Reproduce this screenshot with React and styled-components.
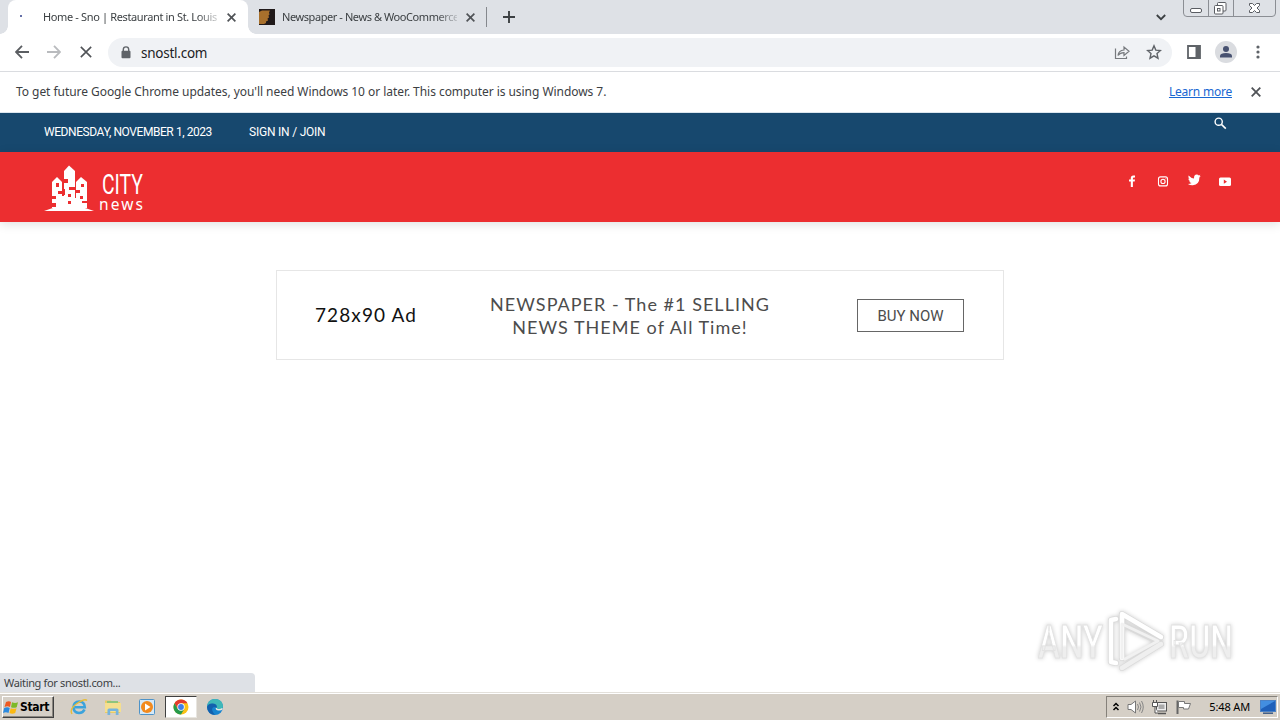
import styled, { createGlobalStyle } from 'styled-components'

const ui = '"Noto Sans", "Open Sans", sans-serif'

const socials = ['facebook', 'instagram', 'twitter', 'youtube']

function App() {
  return (
    <Window>
      <GlobalStyle />
      <TabStrip>
        <ActiveTab>
          <Spinner />
          <TabTitle $spacing={-0.36}>Home - Sno | Restaurant in St. Louis</TabTitle>
          <Cross size={9} weight={1.7} />
        </ActiveTab>
        <Tab>
          <Favicon />
          <TabTitle $spacing={-0.42}>Newspaper - News &amp; WooCommerce</TabTitle>
          <Cross size={9} weight={1.7} />
        </Tab>
        <NewTab>
          <svg width="12" height="12" viewBox="0 0 12 12">
            <path d="M6 0v12M0 6h12" stroke="#3c4043" strokeWidth="1.9" />
          </svg>
        </NewTab>
        <TabSearch>
          <svg width="10" height="7" viewBox="0 0 10 7">
            <path d="M.8 1 5 5.2 9.2 1" fill="none" stroke="#3c4043" strokeWidth="1.8" />
          </svg>
        </TabSearch>
        <WindowButtons />
      </TabStrip>

      <Toolbar>
        <Arrow color="#5b5e62" />
        <Arrow color="#b9bbbe" flip />
        <Stop>
          <Cross size={12} weight={1.6} />
        </Stop>
        <Omnibox>
          <svg width="10" height="13" viewBox="0 0 10 13">
            <path d="M2.3 6V3.6a2.7 2.7 0 0 1 5.4 0V6" fill="none" stroke="#5f6368" strokeWidth="1.4" />
            <rect x=".5" y="4.8" width="9" height="7.4" rx="1" fill="#5f6368" />
          </svg>
          <Url>snostl.com</Url>
          <ShareIcon />
          <StarIcon />
        </Omnibox>
        <ToolbarActions />
      </Toolbar>

      <InfoBar>
        <InfoText>
          To get future Google Chrome updates, you'll need Windows 10 or later. This computer is using Windows 7.
        </InfoText>
        <LearnMore>Learn more</LearnMore>
        <Cross size={10} weight={1.8} />
      </InfoBar>

      <TopBar>
        <TopText $width={205} $spacing={-0.43}>
          WEDNESDAY, NOVEMBER 1, 2023
        </TopText>
        <TopText $spacing={-0.22}>SIGN IN / JOIN</TopText>
        <Search width="13" height="13" viewBox="0 0 13 13">
          <circle cx="4.7" cy="4.7" r="3.6" fill="none" stroke="#fff" strokeWidth="1.4" />
          <path d="m7.4 7.4 4.4 4.2" stroke="#fff" strokeWidth="1.6" />
        </Search>
      </TopBar>

      <Header>
        <CityLogo />
        <Socials>
          {socials.map((name) => (
            <SocialIcon key={name} name={name} />
          ))}
        </Socials>
      </Header>

      <Page>
        <Ad>
          <AdSize>728x90 Ad</AdSize>
          <AdCopy>
            <AdLine>NEWSPAPER - The #1 SELLING</AdLine>
            <AdLine>NEWS THEME of All Time!</AdLine>
          </AdCopy>
          <Buy>BUY NOW</Buy>
        </Ad>
        <PageFooter>
          <Status>Waiting for snostl.com...</Status>
          <AnyRun />
        </PageFooter>
      </Page>

      <Taskbar>
        <StartButton>
          <WindowsFlag />
          <span>Start</span>
        </StartButton>
        <Launchers />
        <Tray />
      </Taskbar>
    </Window>
  )
}

export default App

function Cross({ size, weight }) {
  return (
    <svg width={size} height={size} viewBox="0 0 10 10">
      <path d="m.7.7 8.6 8.6M9.3.7.7 9.3" stroke="#505357" strokeWidth={(weight * 10) / size} />
    </svg>
  )
}

function Arrow({ color, flip }) {
  return (
    <svg width="14" height="14" viewBox="0 0 14 14">
      <path
        d={flip ? 'M0 7h12.5M7 .8 13 7l-6 6.2' : 'M14 7H1.5M7 .8 1 7l6 6.2'}
        fill="none"
        stroke={color}
        strokeWidth="1.8"
      />
    </svg>
  )
}

function Favicon() {
  return (
    <svg width="16" height="16" viewBox="0 0 16 16">
      <rect width="16" height="16" fill="#20191a" />
      <path d="M0 3l3-1.500h8l-1 2 .5 2-1 1 .5 2-1.500 1 .5 2-2 1v1.500l-2 1H0z" fill="#a8702c" />
    </svg>
  )
}

function WindowButtons() {
  return (
    <svg width="94" height="17" viewBox="0 0 94 17">
      <path d="M.5 0v13q0 3.500 3.500 3.500h85q3.500 0 3.500-3.500V0M25.500 0v16M50.500 0v16" fill="none" stroke="#8b8e94" />
      <rect x="7.500" y="8.500" width="11" height="4" rx="1.500" fill="#fff" stroke="#5a5d63" />
      <rect x="34.500" y="2.500" width="8.500" height="8.500" rx="1" fill="#fff" stroke="#5a5d63" />
      <rect x="31.500" y="5.500" width="8.500" height="8.500" rx="1" fill="#fff" stroke="#5a5d63" />
      <rect x="34.500" y="8.500" width="2.500" height="2.500" fill="none" stroke="#5a5d63" />
      <path
        d="M66.500 3.500h3l2 2 2-2h3v2L74 8l2.500 2.500v2h-3l-2-2-2 2h-3v-2L69 8l-2.500-2.500z"
        fill="#fff"
        stroke="#5a5d63"
      />
    </svg>
  )
}

function ShareIcon() {
  return (
    <svg width="16" height="15" viewBox="0 0 16 15">
      <path d="M1.500 3.500v10h11v-2" fill="none" stroke="#777a7e" strokeWidth="1.200" />
      <path
        d="M4 10.500q.5-5 6-5.500V2l5 4.200-5 4.200V7.600Q6 7.600 4 10.500z"
        fill="none"
        stroke="#777a7e"
        strokeWidth="1.200"
      />
    </svg>
  )
}

function StarIcon() {
  return (
    <svg width="16" height="16" viewBox="0 0 16 16">
      <path
        d="m8 1.800 1.800 4.300 4.700.4-3.500 3.100 1 4.600L8 11.800l-4 2.400 1-4.600-3.500-3.100 4.700-.4z"
        fill="none"
        stroke="#5f6368"
        strokeWidth="1.400"
      />
    </svg>
  )
}

function ToolbarActions() {
  return (
    <Actions>
      <svg width="14" height="14" viewBox="0 0 14 14">
        <path d="M1 1h12v12H1z" fill="#fff" stroke="#5f6368" strokeWidth="1.800" />
        <path d="M8.500 1H13v12H8.500z" fill="#5f6368" />
      </svg>
      <svg width="22" height="22" viewBox="0 0 22 22">
        <circle cx="11" cy="11" r="11" fill="#dadce0" />
        <circle cx="11" cy="8" r="3" fill="#475170" />
        <path d="M5 16.500v-1.800Q5.500 12 11 12t6 2.700v1.800z" fill="#475170" />
      </svg>
      <svg width="4" height="14" viewBox="0 0 4 14" fill="#5f6368">
        <circle cx="2" cy="2" r="1.600" />
        <circle cx="2" cy="7" r="1.600" />
        <circle cx="2" cy="12" r="1.600" />
      </svg>
    </Actions>
  )
}

function CityLogo() {
  return (
    <svg width="104" height="50" viewBox="0 0 104 50">
      <g fill="#fff">
        <path d="M0 46q8-3.500 16-4h18q8 .5 16 4z" />
        <path d="M8 17l5-5 5 5v26H8z" />
        <path d="M20 6l5-5.500L31 6v37H20z" />
        <path d="M32 17l5-5 6 5v26H32z" />
        <path d="M17 31h4v11h-4zM30 33h3v9h-3z" />
      </g>
      <g fill="#ec2e30">
        <path d="M12 18h3v4h-3zM14 26h4v3h-4zM8 31h4v3H8zM20 14h4v4h-4zM25 22h6v3h-6zM18 24h3v6h-3zM24 29h3v3h-3zM24 36h3v3h-3zM37 19h3v3h-3zM32 25h4v3h-4zM36 31h3v3h-3zM38 36h5v2h-5zM8 38h4v4H8z" />
      </g>
      <g fill="#fff">
        <text x="58" y="29" fontFamily="Roboto" fontSize="27" textLength="41" lengthAdjust="spacingAndGlyphs">
          CITY
        </text>
        <text x="55" y="44.500" fontFamily="Noto Sans" fontSize="15.500" textLength="44">
          news
        </text>
      </g>
    </svg>
  )
}

function SocialIcon({ name }) {
  return (
    <svg width="14" height="14" viewBox="0 0 14 14" fill="#fff">
      {name === 'facebook' && (
        <path d="M5.800 13V7.500H4V5.600h1.800V4q0-2.500 2.500-2.500H10v1.900H8.900q-1 0-1 1v1.200H10l-.3 1.900H7.900V13z" />
      )}
      {name === 'instagram' && (
        <g fill="none" stroke="#fff" strokeWidth="1.100">
          <rect x="2.500" y="2.900" width="9" height="9" rx="2" />
          <circle cx="7" cy="7.400" r="2.100" />
          <path d="M9.500 4.700h.8" />
        </g>
      )}
      {name === 'twitter' && (
        <path d="M1.600 1.500Q4 4.300 7 4.400 6.800.8 9.800.6q1.400 0 2 .8l1.600-.6-1 1.500 1.300-.3-1.300 1.500q0 7-6.500 7.800-2.700.2-5-1.200 2.300 0 3.700-1.100-1.900-.2-2.400-1.800h1.100Q1.400 6.500 1.300 4.500l1.200.3Q.7 3.400 1.600 1.500z" />
      )}
      {name === 'youtube' && (
        <>
          <rect x="1" y="3.500" width="12" height="8.500" rx="1.500" />
          <path d="M5.800 5.600 9 7.700 5.800 9.800z" fill="#ec2e30" />
        </>
      )}
    </svg>
  )
}

function AnyRun() {
  return (
    <Watermark width="204" height="64" viewBox="0 0 204 64">
      <defs>
        <linearGradient id="fade" x1="0" y1="0" x2="0" y2="1">
          <stop offset=".55" stopColor="#fff" />
          <stop offset=".6" stopColor="#eee" />
        </linearGradient>
      </defs>
      <g fill="url(#fade)" stroke="#e2e2e2" fontFamily="Roboto" fontSize="46" fontWeight="500">
        <text x="0" y="49" textLength="65" lengthAdjust="spacingAndGlyphs">
          ANY
        </text>
        <text x="131" y="49" textLength="64" lengthAdjust="spacingAndGlyphs">
          RUN
        </text>
      </g>
      <g fill="none" strokeLinejoin="round" strokeLinecap="round">
        <path d="M78 10l-5 1v42l5 1M84 49V5l39 23M84 59l39-24M84 49V15l37 18" stroke="#dadada" strokeWidth="6" />
        <path d="M78 10l-5 1v42l5 1M84 49V5l39 23" stroke="#fff" strokeWidth="4.500" />
        <path d="M84 59l39-24" stroke="#efefef" strokeWidth="4.500" />
        <path d="M84 49V15l36 17-33 18" stroke="#f1f1f1" strokeWidth="3" />
      </g>
    </Watermark>
  )
}

function WindowsFlag() {
  return (
    <svg width="16" height="15" viewBox="0 0 16 15">
      <path d="M3 2q3-1.500 5 0L7 7Q4.500 5.500 1.500 7z" fill="#ee5a23" />
      <path d="M9 2.300q3 1.300 6 0L13.700 7.200q-3 1.300-5.700 0z" fill="#7db928" />
      <path d="M1.200 8q3-1.500 5.500 0l-1.200 5Q3 11.500 0 13z" fill="#2b8ae0" />
      <path d="M7.700 8.200q3 1.300 5.800 0L12.200 13q-3 1.500-5.700 0z" fill="#fbb912" />
    </svg>
  )
}

function Launchers() {
  return (
    <LauncherRow>
      <Launcher>
        <svg width="18" height="18" viewBox="0 0 18 18">
          <path
            d="M14.500 11.500Q13 15 9 15q-5.500-.5-5.500-5.800T9.500 3.500q5 .3 5.300 5.700H5"
            fill="none"
            stroke="#3ba3dc"
            strokeWidth="2.600"
          />
          <path d="M2 16Q-1 11 7 5.500T17 2.500" fill="none" stroke="#e8bd37" strokeWidth="1.400" />
        </svg>
      </Launcher>
      <Launcher>
        <svg width="18" height="18" viewBox="0 0 18 18">
          <path d="M1 4V2.500h6l1 1.500h8v11H1z" fill="#e9cb64" />
          <path d="M3 3h11v2H3z" fill="#8fc47c" />
          <path d="M1 5h16v9H1z" fill="#f5df8f" />
          <path d="M3.500 17v-5q0-1.500 1.500-1.500h8q1.500 0 1.500 1.500v5h-2.700v-4H6.200v4z" fill="#77b4dc" />
        </svg>
      </Launcher>
      <Launcher>
        <svg width="18" height="18" viewBox="0 0 18 18">
          <rect x="1.500" y="1.500" width="15" height="15" rx="1" fill="#d5e9f8" stroke="#4e93c8" />
          <circle cx="9" cy="9" r="6" fill="#f28a1e" />
          <path d="M7 5.500v7L12.500 9z" fill="#fff" />
        </svg>
      </Launcher>
      <Launcher $active>
        <svg width="16" height="16" viewBox="0 0 16 16">
          <circle cx="8" cy="8" r="7.500" fill="#fbc116" />
          <path d="M1.500 4.250A7.500 7.500 0 0 1 14.500 4.250H8L4.750 9.900z" fill="#e33b2e" />
          <path d="M1.500 4.250A7.500 7.500 0 0 0 8 15.500l3.250-5.600H4.750z" fill="#269a4b" />
          <circle cx="8" cy="8" r="3.700" fill="#fff" />
          <circle cx="8" cy="8" r="2.900" fill="#3f7fe8" />
        </svg>
      </Launcher>
      <Launcher>
        <svg width="18" height="18" viewBox="0 0 18 18">
          <circle cx="9" cy="9" r="8" fill="#1683cf" />
          <path d="M1 9Q2 1 9 1t8 7q0 3.500-4.500 3.500-2.500 0-2-1.500.5-3-3-4T1 9z" fill="#3fb8b8" />
          <path d="M1 9q1-4 6-3.500T10.500 10Q8 8 6.500 10T9 17Q1.500 16.500 1 9z" fill="#1260ad" />
          <path d="M10.500 10q-.5 1.500 2 1.800t4-1.300" fill="none" stroke="#e5e7e3" strokeWidth="1.500" />
        </svg>
      </Launcher>
    </LauncherRow>
  )
}

function Tray() {
  return (
    <TrayBox>
      <svg width="8" height="10" viewBox="0 0 8 10">
        <path d="m1.500 4 2.500-2.500L6.500 4M1.500 8 4 5.500 6.500 8" fill="none" stroke="#000" strokeWidth="1.500" />
      </svg>
      <svg width="17" height="16" viewBox="0 0 17 16">
        <path d="M1 5.500h3L8.500 2v12L4 10.500H1z" fill="#fff" stroke="#777" />
        <path d="M10.500 5q2 3 0 6M12.500 3.500q3 4.500 0 9M14.500 2q3.500 6 0 12" fill="none" stroke="#858585" />
      </svg>
      <svg width="17" height="16" viewBox="0 0 17 16">
        <rect x="5.500" y="3.500" width="10" height="8.500" fill="#eee" stroke="#555" />
        <rect x="7.500" y="5.500" width="6" height="4.500" fill="#aaa" />
        <path d="M7 14.500h8" stroke="#555" strokeWidth="1.500" />
        <path d="M1.500 3.500h5v4h-5zM2.500 1v2M5.500 1v2M4 8v6h3" fill="#fff" stroke="#555" />
      </svg>
      <svg width="17" height="16" viewBox="0 0 17 16">
        <path d="M2.500 15V1.500" stroke="#666" strokeWidth="2" />
        <path d="M3.500 2.500h6v2h6l-2 5.500H8.500V8.500h-5z" fill="#fff" stroke="#777" />
      </svg>
      <Clock>5:48 AM</Clock>
      <svg width="16" height="14" viewBox="0 0 16 14">
        <rect x=".5" y=".5" width="15" height="11" fill="#1f60ba" stroke="#4c82c5" />
        <path d="M1 1h14L1 9z" fill="#438ee0" />
        <path d="M3 13.200h10" stroke="#3b5a85" strokeWidth="1.500" />
      </svg>
    </TrayBox>
  )
}

const GlobalStyle = createGlobalStyle`
  * {
    box-sizing: border-box;
  }
  body {
    margin: 0;
    overflow: hidden;
  }
  svg {
    display: block;
    flex: none;
  }
`

const Window = styled.div`
  width: 1280px;
  height: 720px;
  display: flex;
  flex-direction: column;
  background: #fff;
  font-family: ${ui};
  color: #3c4043;
  white-space: nowrap;
`

const TabStrip = styled.div`
  height: 34px;
  flex: none;
  display: flex;
  align-items: flex-start;
  padding: 0 3px 0 8px;
  background: #dee1e6;
`

const Tab = styled.div`
  width: 238px;
  height: 34px;
  display: flex;
  align-items: center;
  padding: 0 11px;
  gap: 7px;
  svg:last-child {
    margin-left: 2px;
  }
`

const ActiveTab = styled(Tab)`
  position: relative;
  width: 240px;
  background: #fff;
  border-radius: 8px 8px 0 0;

  /* flared feet that join the tab to the toolbar */
  &::before,
  &::after {
    content: '';
    position: absolute;
    bottom: 0;
    width: 8px;
    height: 8px;
  }
  &::before {
    left: -8px;
    background: radial-gradient(circle at 0 0, transparent 7.5px, #fff 8px);
  }
  &::after {
    right: -8px;
    background: radial-gradient(circle at 100% 0, transparent 7.5px, #fff 8px);
  }
`

const Spinner = styled.div`
  width: 17px;
  height: 4px;
  &::before {
    content: '';
    display: block;
    width: 2px;
    height: 2px;
    margin-left: 1px;
    background: #6570a8;
  }
`

const TabTitle = styled.div`
  width: 175px;
  font-size: 11px;
  line-height: 16px;
  letter-spacing: ${({ $spacing }) => $spacing}px;
  mask-image: linear-gradient(to right, #000 88%, rgba(0, 0, 0, 0.2));
`

const NewTab = styled.div`
  display: flex;
  margin-top: 7px;
  padding: 4px 0 4px 16px;
  border-left: 1px solid #85888d;
`

const TabSearch = styled.div`
  margin: 14px 17px 0 auto;
`

const Toolbar = styled.div`
  height: 38px;
  flex: none;
  display: flex;
  align-items: center;
  gap: 18px;
  padding: 0 20px 1px 15px;
  border-bottom: 1px solid #dadce0;
`

const Stop = styled.div`
  width: 14px;
  padding-left: 1px;
  margin-right: -3px;
`

const Omnibox = styled.div`
  width: 1064px;
  height: 29px;
  display: flex;
  align-items: center;
  gap: 16px;
  padding: 0 10px 0 13px;
  border-radius: 15px;
  background: #f0f2f5;
`

const Url = styled.div`
  flex: 1;
  margin: 2px 0 0 -6px;
  font-size: 13.5px;
  letter-spacing: -0.25px;
  color: #202124;
`

const Actions = styled.div`
  display: flex;
  align-items: center;
  gap: 14px;
  margin-left: -3px;
  svg:last-child {
    margin-left: 5px;
  }
`

const InfoBar = styled.div`
  height: 41px;
  flex: none;
  display: flex;
  align-items: center;
  padding: 0 19px 0 16px;
  border-bottom: 1px solid #dce6ee;
  font-size: 12px;
`

const InfoText = styled.div`
  flex: 1;
  margin-top: -1px;
  letter-spacing: -0.05px;
`

const LearnMore = styled.div`
  margin: -1px 19px 0 0;
  letter-spacing: -0.22px;
  color: #1967d2;
  text-decoration: underline;
`

const TopBar = styled.div`
  height: 39px;
  flex: none;
  display: flex;
  padding: 0 53px 0 44px;
  background: #17486e;
`

const TopText = styled.div`
  width: ${({ $width }) => ($width ? `${$width}px` : 'auto')};
  font: 12px/38px Roboto, sans-serif;
  letter-spacing: ${({ $spacing }) => $spacing}px;
  color: #fff;
`

const Search = styled.svg`
  margin: 4px 0 0 auto;
`

const Header = styled.div`
  height: 70px;
  flex: none;
  display: flex;
  justify-content: space-between;
  padding: 13px 48px 0 44px;
  background: #ec2e30;
  box-shadow: 0 2px 10px rgba(0, 0, 0, 0.13);
`

const Socials = styled.div`
  display: flex;
  gap: 17px;
  padding-top: 9px;
`

const Page = styled.div`
  flex: 1;
  display: flex;
  flex-direction: column;
  align-items: center;
  justify-content: space-between;
  padding-top: 48px;
`

const Ad = styled.div`
  width: 728px;
  height: 90px;
  display: flex;
  align-items: center;
  border: 1px solid #e6e6e6;
  padding: 0 39px 0 38px;
  font-family: Lato, sans-serif;
`

const AdSize = styled.div`
  width: 152px;
  font-size: 19px;
  line-height: 22px;
  letter-spacing: 1.1px;
  color: #111;
`

const AdCopy = styled.div`
  width: 326px;
  display: flex;
  flex-direction: column;
  align-items: center;
  padding-top: 2px;
`

const AdLine = styled.div`
  font-size: 18px;
  line-height: 23px;
  letter-spacing: 1.03px;
  color: #4c4c4c;
`

const Buy = styled.div`
  width: 107px;
  height: 33px;
  margin-left: auto;
  border: 1px solid #666;
  font: 15px/32px Roboto, sans-serif;
  text-align: center;
  color: #4c4c4c;
`

const PageFooter = styled.div`
  width: 100%;
  display: flex;
  align-items: flex-end;
  justify-content: space-between;
`

const Status = styled.div`
  width: 255px;
  height: 19px;
  padding-left: 4px;
  border-top-right-radius: 4px;
  background: #dee1e6;
  font-size: 11px;
  line-height: 20px;
  letter-spacing: -0.34px;
`

const Watermark = styled.svg`
  margin: 0 38px 19px 0;
  filter: drop-shadow(0 0 2px rgba(0, 0, 0, 0.2));
`

const Taskbar = styled.div`
  height: 28px;
  flex: none;
  display: flex;
  align-items: center;
  padding: 1px 2px 0;
  background: #d5cfc6;
  border-top: 1px solid #e3e0da;
  box-shadow: inset 0 1px #fff;
`

const StartButton = styled.div`
  width: 52px;
  height: 22px;
  display: flex;
  align-items: center;
  border: 1px solid;
  border-color: #fff #404040 #404040 #fff;
  box-shadow: inset -1px -1px #8b8780;
  font: bold 12px 'DejaVu Sans Condensed', 'DejaVu Sans', sans-serif;
  letter-spacing: -0.35px;
  color: #000;
  span {
    margin-left: 1px;
  }
`

const LauncherRow = styled.div`
  display: flex;
  margin-left: 9px;
  gap: 2px;
`

const Launcher = styled.div`
  width: 32px;
  height: 22px;
  display: flex;
  align-items: center;
  justify-content: center;
  border: 1px solid transparent;
  ${({ $active }) => $active && 'background: #fff; border-color: #404040 #e8e5df #e8e5df #404040;'}
`

const TrayBox = styled.div`
  width: 172px;
  height: 22px;
  display: flex;
  align-items: center;
  gap: 7px;
  margin-left: auto;
  padding: 0 1px 0 5px;
  border: 1px solid;
  border-color: #85817a #fff #fff #85817a;
`

const Clock = styled.div`
  margin: -1px 3px 0 auto;
  font-size: 11px;
  letter-spacing: -0.15px;
  color: #000;
`
